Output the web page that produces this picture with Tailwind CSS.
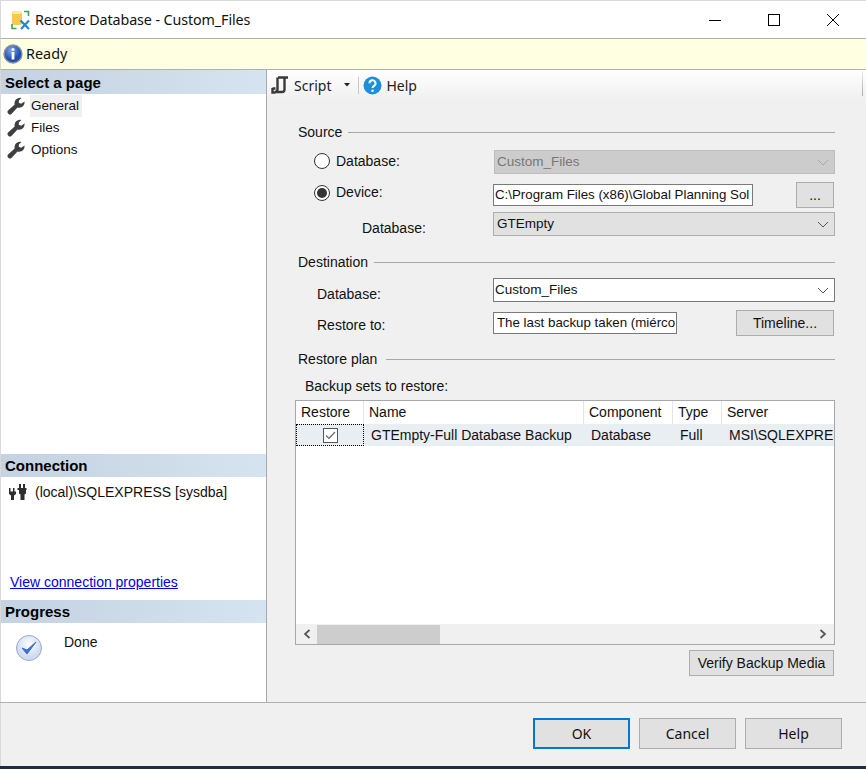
<!DOCTYPE html>
<html lang="en">
<head>
  <meta charset="UTF-8" />
  <title>Restore Database - Custom_Files</title>
  <script src="https://cdn.jsdelivr.net/npm/@tailwindcss/browser@4"></script>
</head>
<body class="bg-white overflow-hidden">
<div class="w-[866px] h-[769px] flex flex-col bg-[#f0f0f0] text-[14px] text-black font-['Liberation_Sans',sans-serif] overflow-hidden">

  <!-- Title bar -->
  <div class="h-[39px] shrink-0 bg-white border-t border-l border-[#d9d9d9] border-b-[#b0b0b0] border-b flex items-center">
    <svg class="ml-[10px] w-[19px] h-[20px]" viewBox="0 0 19 20">
      <path d="M1 2.500q0-1.500 5-1.500t5 1.500v11q0 1.500-5 1.500t-5-1.500z" fill="#f6c94f"/>
      <ellipse cx="6" cy="2.500" rx="5" ry="1.500" fill="#fde9a8"/>
      <path d="M13 1.500h4.500V6M1 14v4.500h4.500" fill="none" stroke="#3f9f5a" stroke-width="1.600"/>
      <path d="M9.500 10.500l8.500 8.500M18 10.500L10 19" stroke="#1e86d8" stroke-width="2.200"/>
    </svg>
    <span class="ml-[5px] text-[14.3px] tracking-[-0.1px] text-[#111] font-['Noto_Sans',sans-serif]">Restore Database - Custom_Files</span>
    <div class="ml-auto flex items-center">
      <svg class="w-[14px] h-[14px] mr-[45px]" viewBox="0 0 14 14"><path d="M1 7.500h12" stroke="#000"/></svg>
      <svg class="w-[14px] h-[14px] mr-[45px]" viewBox="0 0 14 14"><rect x="1.500" y="1.500" width="11" height="11" fill="none" stroke="#000"/></svg>
      <svg class="w-[14px] h-[14px] mr-[26px]" viewBox="0 0 14 14"><path d="M1 1l12 12M13 1L1 13" stroke="#000"/></svg>
    </div>
  </div>

  <!-- Status -->
  <div class="h-[31px] shrink-0 bg-[#ffffe1] border-b border-l border-[#b0b0b0] border-l-[#d9d9d9] flex items-center">
    <svg class="ml-[2px] w-[20px] h-[20px]" viewBox="0 0 20 20">
      <defs><radialGradient id="info" cx="40%" cy="30%"><stop offset="0" stop-color="#7fa8ea"/><stop offset="1" stop-color="#1f4fb0"/></radialGradient></defs>
      <circle cx="10" cy="10" r="9" fill="url(#info)" stroke="#8c9097" stroke-width="1.400"/>
      <circle cx="10" cy="5.500" r="1.500" fill="#fff"/>
      <rect x="8.600" y="8" width="2.800" height="7.500" fill="#fff"/>
    </svg>
    <span class="ml-[3px] text-[#111] font-['Noto_Sans',sans-serif] text-[14.4px]">Ready</span>
  </div>

  <div class="flex h-[633px] shrink-0 border-b border-[#b0b0b0]">

    <!-- Left panel -->
    <div class="w-[267px] shrink-0 bg-white border-l border-r border-l-[#d9d9d9] border-r-[#a8a8a8] flex flex-col">
      <div class="h-[24px] shrink-0 px-[4px] pt-[3px] flex items-center font-bold text-[15px] bg-gradient-to-r from-[#c4d2e1] to-[#d6e3f0]">Select a page</div>
      <div class="h-[360px] shrink-0 pl-[6px] pt-px text-[13.5px]">
        <div class="flex items-center h-[22px]">
          <svg class="w-[18px] h-[18px]" viewBox="0 0 18 18"><path d="M17.500 4.500l-3.300 2.300-2.500-1 .3-2.600L14.500 1a5.500 5.500 0 0 0-6.800 6.600L1.300 13.300a2.400 2.400 0 0 0 3.400 3.400L10.500 10.500A5.500 5.500 0 0 0 17.500 4.500z" fill="#3f3f3f"/></svg>
          <span class="ml-[5px] px-px h-[22px] leading-[22px] bg-[#f0f0f0] w-[52px] text-[#111]">General</span>
        </div>
        <div class="flex items-center h-[22px]">
          <svg class="w-[18px] h-[18px]" viewBox="0 0 18 18"><path d="M17.500 4.500l-3.300 2.300-2.500-1 .3-2.600L14.500 1a5.500 5.500 0 0 0-6.800 6.600L1.300 13.300a2.400 2.400 0 0 0 3.400 3.400L10.500 10.500A5.500 5.500 0 0 0 17.500 4.500z" fill="#3f3f3f"/></svg>
          <span class="ml-[6px] text-[#111]">Files</span>
        </div>
        <div class="flex items-center h-[22px]">
          <svg class="w-[18px] h-[18px]" viewBox="0 0 18 18"><path d="M17.500 4.500l-3.300 2.300-2.500-1 .3-2.600L14.500 1a5.500 5.500 0 0 0-6.800 6.600L1.300 13.300a2.400 2.400 0 0 0 3.400 3.400L10.500 10.500A5.500 5.500 0 0 0 17.500 4.500z" fill="#3f3f3f"/></svg>
          <span class="ml-[6px] text-[#111]">Options</span>
        </div>
      </div>
      <div class="h-[23px] shrink-0 px-[4px] pt-px flex items-center font-bold text-[15px] bg-gradient-to-r from-[#c4d2e1] to-[#d6e3f0]">Connection</div>
      <div class="h-[123px] shrink-0 flex flex-col pl-[7px]">
        <div class="flex items-center h-[18px] mt-[6px]">
          <svg class="w-[19px] h-[18px]" viewBox="0 0 19 18">
            <path d="M1 5h1.500v3.500h2.500V5h1.500v3.500H8v2.500l-2 1.500V17H3v-4.500L1 11V8.500z" fill="#2f2f2f"/>
            <path d="M11 1h2v4h2V1h2v4h1.500v2H18v3.500l-1.500 1V17h-4v-5.500l-1.500-1V7H9.500V5H11z" fill="#2f2f2f"/>
          </svg>
          <span class="ml-[8px] text-[#111]">(local)\SQLEXPRESS [sysdba]</span>
        </div>
        <a href="#" class="mt-auto mb-[7px] ml-[2px] text-[#0000e6] underline">View connection properties</a>
      </div>
      <div class="h-[23px] shrink-0 px-[4px] pt-px flex items-center font-bold text-[15px] bg-gradient-to-r from-[#c4d2e1] to-[#d6e3f0]">Progress</div>
      <div class="flex-1 flex pl-[14px] pt-[10px]">
        <svg class="w-[28px] h-[28px]" viewBox="0 0 28 28">
          <defs><radialGradient id="chk" cx="50%" cy="35%"><stop offset="0" stop-color="#ffffff"/><stop offset="1" stop-color="#cfdcf0"/></radialGradient></defs>
          <circle cx="14" cy="15" r="12.500" fill="url(#chk)" stroke="#9aa9c4"/>
          <path d="M7 15l5 6 9-12-9 8z" fill="#3c6fd0" stroke="#3c6fd0" stroke-linejoin="round"/>
        </svg>
        <span class="ml-[21px] -mt-px text-[#111]">Done</span>
      </div>
    </div>

    <!-- Right panel -->
    <div class="flex-1 flex flex-col min-w-0">
      <div class="h-[30px] shrink-0 relative flex items-center bg-gradient-to-b from-white to-[#f0f0f0] text-[#222] font-['Noto_Sans',sans-serif] text-[14px]">
        <svg class="ml-[4px] w-[18px] h-[18px]" viewBox="0 0 18 18"><path d="M7 1.500h10M6.500 1.500v11.500q0 3-2.500 3h7q2.500 0 2.500-2.500V2M1.500 12.500h3M1.500 12v4.500h3" fill="none" stroke="#3a3a3a" stroke-width="2.400"/></svg>
        <span class="ml-[5px]">Script</span>
        <svg class="ml-[13px] w-[6px] h-[4px]" viewBox="0 0 6 4"><path d="M0 0h6L3 3.500z" fill="#222"/></svg>
        <div class="ml-[8px] w-px h-[17px] bg-[#c8c8c8]"></div>
        <svg class="ml-[4px] w-[19px] h-[19px]" viewBox="0 0 19 19">
          <circle cx="9.500" cy="9.500" r="9" fill="#1c8fdc"/>
          <path d="M6.500 7.300a3 3 0 1 1 4.500 2.500c-1 .6-1.500 1-1.500 2.200" fill="none" stroke="#fff" stroke-width="2"/>
          <circle cx="9.500" cy="14.800" r="1.300" fill="#fff"/>
        </svg>
        <span class="ml-[4px]">Help</span>
        <div class="absolute right-[3px] top-[1px] w-px h-[25px] bg-gradient-to-b from-[#eee] to-[#aaa]"></div>
      </div>

      <div class="pl-[28px] pr-[31px] text-[#111]">
        <!-- Source -->
        <div class="flex items-center h-[16px] mt-[24px]">
          <span class="shrink-0 ml-[3px]">Source</span>
          <div class="flex-1 h-px bg-[#a8a8a8] ml-[6px]"></div>
        </div>
        <div class="flex items-center h-[24px] mt-[10px]">
          <span class="ml-[19px] mb-[2px] w-[16px] h-[16px] rounded-full border border-[#333] bg-white"></span>
          <span class="ml-[6px] mb-[2px] w-[157px]">Database:</span>
          <div class="w-[341px] h-[24px] ml-auto flex items-center justify-between pl-[2px] pr-[3px] pt-px bg-[#cccccc] border border-[#bdbdbd] text-[#777] text-[13.5px]">
            <span>Custom_Files</span>
            <svg class="w-[12px] h-[7px] mr-[2px]" viewBox="0 0 12 7"><path d="M1 1l5 5 5-5" fill="none" stroke="#a8a8a8"/></svg>
          </div>
        </div>
        <div class="flex items-center h-[26px] mt-[8px]">
          <span class="ml-[19px] mb-[4px] w-[16px] h-[16px] rounded-full border border-[#333] bg-white flex items-center justify-center"><span class="w-[10px] h-[10px] rounded-full bg-[#333]"></span></span>
          <span class="ml-[6px] mb-[6px] w-[157px]">Device:</span>
          <div class="w-[260px] h-[22px] border border-[#7a7a7a] bg-white px-px leading-[20px] overflow-hidden whitespace-nowrap text-[13.3px]">C:\Program Files (x86)\Global Planning Sol</div>
          <button class="ml-auto mr-px w-[38px] h-[26px] border border-[#adadad] bg-[#e1e1e1] text-[#111] leading-[22px]">...</button>
        </div>
        <div class="flex items-center h-[24px] mt-[4px]">
          <span class="ml-[67px] mt-[8px] w-[131px]">Database:</span>
          <div class="w-[342px] h-[24px] ml-auto flex items-center justify-between px-[3px] bg-[#e1e1e1] border border-[#adadad] text-[#111] text-[13.5px]">
            <span>GTEmpty</span>
            <svg class="w-[12px] h-[7px] mr-[2px]" viewBox="0 0 12 7"><path d="M1 1l5 5 5-5" fill="none" stroke="#555"/></svg>
          </div>
        </div>

        <!-- Destination -->
        <div class="flex items-center h-[16px] mt-[18px]">
          <span class="shrink-0 ml-[3px]">Destination</span>
          <div class="flex-1 h-px bg-[#a8a8a8] ml-[6px]"></div>
        </div>
        <div class="flex items-center h-[24px] mt-[8px]">
          <span class="ml-[22px] mt-[8px]">Database:</span>
          <div class="w-[342px] h-[24px] ml-auto flex items-center justify-between px-[1px] bg-white border border-[#7a7a7a] text-[13.5px]">
            <span>Custom_Files</span>
            <svg class="w-[12px] h-[7px] mr-[4px]" viewBox="0 0 12 7"><path d="M1 1l5 5 5-5" fill="none" stroke="#555"/></svg>
          </div>
        </div>
        <div class="flex items-center h-[26px] mt-[8px]">
          <span class="ml-[22px] mt-[4px] w-[176px] text-[#111]">Restore to:</span>
          <div class="w-[184px] h-[22px] border border-[#7a7a7a] bg-white px-[3px] leading-[20px] overflow-hidden whitespace-nowrap text-[13.3px]">The last backup taken (miérco</div>
          <button class="ml-auto mr-px w-[98px] h-[26px] border border-[#adadad] bg-[#e1e1e1] text-[#111]">Timeline...</button>
        </div>

        <!-- Restore plan -->
        <div class="flex items-center h-[16px] mt-[15px]">
          <span class="shrink-0 ml-[3px]">Restore plan</span>
          <div class="flex-1 h-px bg-[#a8a8a8] ml-[9px]"></div>
        </div>
        <div class="ml-[10px] h-[16px] mt-[11px] leading-[16px]">Backup sets to restore:</div>

        <!-- Backup sets table -->
        <div class="mt-[6px] h-[245px] border border-[#a8a8a8] bg-white flex flex-col overflow-hidden">
          <div class="flex h-[23px] shrink-0 leading-[23px] whitespace-nowrap">
            <div class="w-[68px] shrink-0 border-r border-[#e5e5e5] pl-[5px]">Restore</div>
            <div class="w-[220px] shrink-0 border-r border-[#e5e5e5] pl-[5px]">Name</div>
            <div class="w-[89px] shrink-0 border-r border-[#e5e5e5] pl-[5px]">Component</div>
            <div class="w-[49px] shrink-0 border-r border-[#e5e5e5] pl-[5px]">Type</div>
            <div class="pl-[5px]">Server</div>
          </div>
          <div class="flex h-[22px] shrink-0 leading-[22px] whitespace-nowrap bg-[#e9eef2]">
            <div class="w-[68px] shrink-0 border border-dotted border-black flex items-center justify-center">
              <svg class="w-[15px] h-[15px]" viewBox="0 0 15 15"><rect x=".5" y=".5" width="14" height="14" fill="#fff" stroke="#555"/><path d="M3 7.500l3 3 6-6.500" fill="none" stroke="#666" stroke-width="1.200"/></svg>
            </div>
            <div class="w-[220px] shrink-0 pl-[7px]">GTEmpty-Full Database Backup</div>
            <div class="w-[89px] shrink-0 pl-[7px]">Database</div>
            <div class="w-[49px] shrink-0 pl-[7px]">Full</div>
            <div class="pl-[7px]">MSI\SQLEXPRESS</div>
          </div>
          <div class="flex-1"></div>
          <div class="h-[20px] shrink-0 flex items-center bg-[#f0f0f0]">
            <svg class="ml-[7px] w-[8px] h-[10px]" viewBox="0 0 8 10"><path d="M6.500 1L2 5l4.500 4" fill="none" stroke="#555" stroke-width="1.700"/></svg>
            <div class="ml-[6px] w-[123px] h-[19px] bg-[#cdcdcd]"></div>
            <svg class="ml-auto mr-[7px] w-[8px] h-[10px]" viewBox="0 0 8 10"><path d="M1.500 1L6 5 1.500 9" fill="none" stroke="#555" stroke-width="1.700"/></svg>
          </div>
        </div>
        <div class="flex justify-end mt-[5px] mr-px">
          <button class="w-[145px] h-[26px] border border-[#adadad] bg-[#e1e1e1] text-[#111]">Verify Backup Media</button>
        </div>
      </div>
    </div>
  </div>

  <!-- Footer buttons -->
  <div class="flex-1 relative flex justify-end items-start pt-[15px] pr-[24px] gap-[9px] text-[14px] text-[#111] font-['Noto_Sans',sans-serif] border-l border-[#d9d9d9]">
    <button class="w-[97px] h-[31px] border-2 border-[#0078d7] bg-[#e1e1e1]">OK</button>
    <button class="w-[97px] h-[31px] border border-[#adadad] bg-[#e1e1e1]">Cancel</button>
    <button class="w-[97px] h-[31px] border border-[#adadad] bg-[#e1e1e1]">Help</button>
  </div>
  <div class="h-[3px] shrink-0 bg-[#1f2d3f]"></div>
</div>
</body>
</html>
